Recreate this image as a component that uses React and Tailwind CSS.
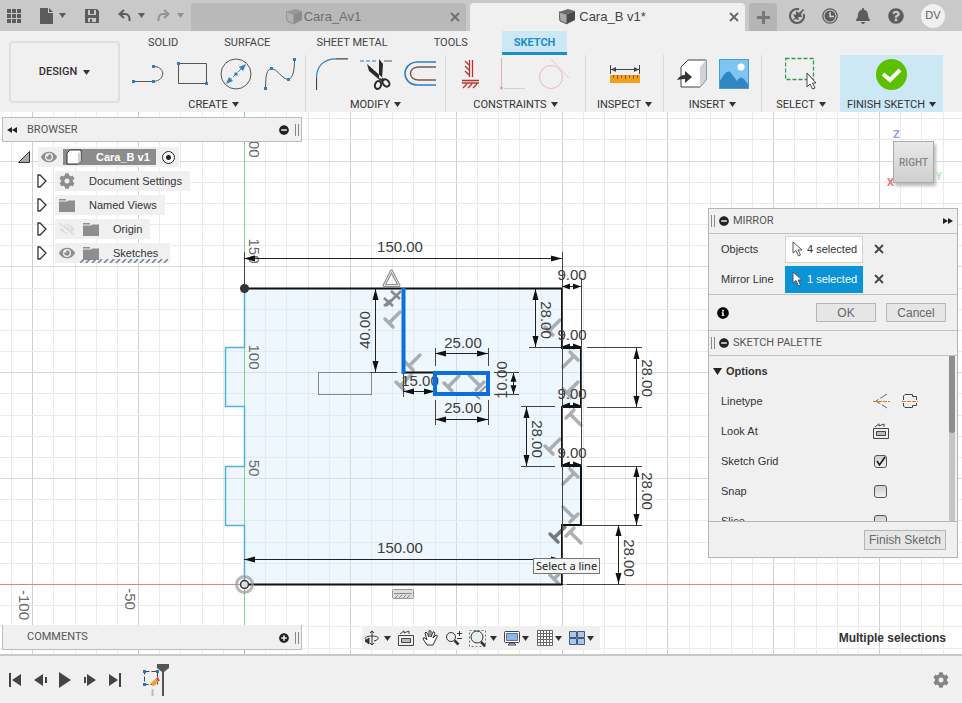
import { useState } from 'react';
import clsx from 'clsx';
import { FaBell, FaCog, FaEye, FaEyeSlash, FaQuestionCircle, FaInfoCircle, FaPlusCircle, FaMinusCircle } from 'react-icons/fa';

const RIBBON_TABS = ['SOLID', 'SURFACE', 'SHEET METAL', 'TOOLS', 'SKETCH'];

// Sketch space: 10 mm is 21.17 px, the origin sits at ORIGIN
const STEP = 21.17;
const ORIGIN = { x: 244, y: 472 };

const GRID_X = Array.from({ length: 130 }, (_, i) => i - 11);
const GRID_Y = Array.from({ length: 90 }, (_, i) => i - 22);

// direction: h = horizontal, v = vertical; a and b are the arrow tips
const DIMENSIONS = [
  { dir: 'h', at: 146, a: 244, b: 562, text: '150.00', x: 400, y: 135 },
  { dir: 'h', at: 447, a: 244, b: 562, text: '150.00', x: 400, y: 436 },
  { dir: 'h', at: 279, a: 403, b: 435, text: '15.00', x: 420, y: 269 },
  { dir: 'h', at: 241, a: 435, b: 488, text: '25.00', x: 463, y: 231 },
  { dir: 'h', at: 307, a: 435, b: 488, text: '25.00', x: 463, y: 296 },
  { dir: 'h', at: 174, a: 562, b: 581, text: '9.00', x: 572, y: 163 },
  { dir: 'h', at: 234, a: 562, b: 581, text: '9.00', x: 572, y: 223 },
  { dir: 'h', at: 293, a: 562, b: 581, text: '9.00', x: 572, y: 282 },
  { dir: 'h', at: 352, a: 562, b: 581, text: '9.00', x: 572, y: 341 },
  { dir: 'v', at: 375, a: 177, b: 260, text: '40.00', x: 365, y: 218, turn: -90 },
  { dir: 'v', at: 513, a: 261, b: 282, text: '10.00', x: 502, y: 268, turn: -90 },
  { dir: 'v', at: 535, a: 177, b: 235, text: '28.00', x: 546, y: 208, turn: 90 },
  { dir: 'v', at: 526, a: 295, b: 354, text: '28.00', x: 537, y: 327, turn: 90 },
  { dir: 'v', at: 636, a: 236, b: 295, text: '28.00', x: 647, y: 266, turn: 90 },
  { dir: 'v', at: 636, a: 354, b: 413, text: '28.00', x: 647, y: 379, turn: 90 },
  { dir: 'v', at: 618, a: 413, b: 472, text: '28.00', x: 629, y: 446, turn: 90 },
];

const EXTENSIONS = [
  'M244.5 140V176', 'M562.5 140V472', 'M581.5 166V354',
  'M370 260.5H397', 'M403.5 262V285', 'M435.5 236V254', 'M488.5 236V254',
  'M435.5 288V313', 'M488.5 288V313', 'M494 260.5H519', 'M494 282.5H519',
  'M529 235.5H561', 'M521 294.5H555', 'M521 354.5H555',
  'M587 235.5H642', 'M587 295.5H642', 'M587 354.5H642', 'M581 413.5H642', 'M567 472.5H625',
];

const AXIS_LABELS = [
  { text: '200', x: 254, y: 33 },
  { text: '150', x: 254, y: 139 },
  { text: '100', x: 254, y: 245 },
  { text: '50', x: 254, y: 356 },
  { text: '-50', x: 130, y: 487 },
  { text: '-100', x: 24, y: 493 },
];

const PERPENDICULARS = [
  [389, 211, 0], [409, 254, 0], [400, 274, 0], [448, 275, 0], [480, 274, -90],
  [549, 219, 0], [574, 244, 180], [567, 281, 0], [570, 302, 90], [549, 338, 0],
  [574, 361, 180], [574, 406, -90], [570, 420, 90], [554, 467, 0],
];

function Caret({ className = 'text-[#333]' }) {
  return (
    <svg width="7" height="5" viewBox="0 0 7 5" className={clsx('shrink-0', className)} fill="currentColor">
      <path d="M0 0H7L3.5 5Z" />
    </svg>
  );
}

function CubeIcon({ dim }) {
  return (
    <svg width="16" height="16" viewBox="0 0 16 16" className={dim ? 'opacity-40' : ''}>
      <path d="M0 3L9 0L16 2L8 5Z" fill="#6b6b6b" />
      <path d="M0 3L8 5V15L1 12Z" fill="#a9a9a9" stroke="#555" strokeWidth="1" />
      <path d="M8 5L16 2V11L8 15Z" fill="#4a4a4a" />
    </svg>
  );
}

function CloseIcon({ size }) {
  return (
    <svg width={size} height={size} viewBox="0 0 10 10" stroke="currentColor" strokeWidth="1.800"><path d="M1 1L9 9M9 1L1 9" /></svg>
  );
}

function TopBar() {
  return (
    <header className="flex h-[31px] bg-[#c9c9c9] text-[#5c5c5c]">
      <div className="flex w-[191px] shrink-0 items-center pl-[7px]">
        <button aria-label="Data panel">
          <svg width="14" height="14" viewBox="0 0 14 14" fill="currentColor">
            {[0, 5, 10].map((y) => [0, 5, 10].map((x) => <rect key={`${x}-${y}`} x={x} y={y} width="4" height="4" />))}
          </svg>
        </button>
        <button aria-label="File" className="ml-[19px] flex items-center gap-1.5">
          <svg width="13" height="16" viewBox="0 0 13 16" fill="currentColor"><path d="M0 0H8V5H13V16H0ZM9 0L13 4H9Z" /></svg>
          <Caret className="text-[#5c5c5c]" />
        </button>
        <button aria-label="Save" className="ml-[19px]">
          <svg width="14" height="14" viewBox="0 0 14 14">
            <path d="M0 0H12L14 2V14H0Z" fill="currentColor" />
            <path d="M3 1H11V6H3ZM3 9H11V13H3Z" fill="#c9c9c9" />
            <path d="M5 1H9V5H5ZM5 10H7V13H5Z" fill="currentColor" />
          </svg>
        </button>
        <button aria-label="Undo" className="ml-[19px] flex items-center gap-[7px]">
          <svg width="13" height="13" viewBox="0 0 13 13" fill="none" stroke="currentColor" strokeWidth="2"><path d="M6 1L1.5 5L6 9M2 5H7Q12 5 11.5 12" /></svg>
          <Caret className="text-[#5c5c5c]" />
        </button>
        <button aria-label="Redo" className="ml-3 flex items-center gap-[7px] text-[#929292]">
          <svg width="13" height="13" viewBox="0 0 13 13" fill="none" stroke="currentColor" strokeWidth="2"><path d="M7 1L11.5 5L7 9M11 5H6Q1 5 1.5 12" /></svg>
          <Caret className="text-[#929292]" />
        </button>
      </div>

      <div className="flex flex-1 gap-1 pt-[3px]">
        <div className="flex flex-1 items-center rounded-t bg-[#b9b9b9] px-1.5 text-[13px] text-[#6e6e6e]">
          <button className="flex flex-1 items-center justify-center gap-0.5"><CubeIcon dim />Cara_Av1</button>
          <button aria-label="Close Cara_A"><CloseIcon size={10} /></button>
        </div>
        <div className="flex flex-1 items-center rounded-t bg-[#f0f0f0] px-1.5 text-[13px] text-[#444]">
          <button className="flex flex-1 items-center justify-center gap-1"><CubeIcon />Cara_B v1*</button>
          <button aria-label="Close Cara_B" className="text-[#666]"><CloseIcon size={10} /></button>
        </div>
        <button aria-label="New design" className="flex w-7 items-center justify-center rounded-t bg-[#b5b5b5]">
          <svg width="13" height="13" viewBox="0 0 13 13" stroke="#777" strokeWidth="3"><path d="M6.5 0V13M0 6.5H13" /></svg>
        </button>
      </div>

      <div className="flex w-[185px] shrink-0 items-center gap-[17px] pl-3">
        <button aria-label="Extensions">
          <svg width="16" height="16" viewBox="0 0 16 16">
            <path d="M10 1.300A7 7 0 1 0 14.700 6" fill="none" stroke="currentColor" strokeWidth="2" />
            <path d="M2 13L6 10L4 6L7 7V3L10 5L14 1L15 2L12 6L13 9L9 9L10 12L6 11L3 14Z" fill="currentColor" />
          </svg>
        </button>
        <button aria-label="Job status">
          <svg width="16" height="16" viewBox="0 0 16 16" fill="none">
            <circle cx="8" cy="8" r="7.200" stroke="currentColor" strokeWidth="1.300" />
            <circle cx="8" cy="8" r="5.500" fill="currentColor" />
            <path d="M8 4V8.500H12" stroke="#d5d5d5" strokeWidth="1.500" />
          </svg>
        </button>
        <button aria-label="Notifications"><FaBell size={16} /></button>
        <button aria-label="Help"><FaQuestionCircle size={16} /></button>
        <button className="flex size-6 items-center justify-center rounded-full bg-[#f0f0f0] text-[11px]">DV</button>
      </div>
    </header>
  );
}

function RibbonGroup({ label, width, children, last }) {
  return (
    <div className={clsx('flex shrink-0 flex-col items-center', width, !last && 'border-r border-[#d8d8d8]')}>
      <div className="flex h-[38px] items-center justify-center gap-3">{children}</div>
      <button className="mt-1 flex items-center gap-1 text-[11px] leading-[15px] text-[#333]">{label}<Caret /></button>
    </div>
  );
}

function CreateIcons() {
  return (
    <>
      <svg width="32" height="32" viewBox="0 0 32 32" fill="none" stroke="#555" strokeWidth="1">
        <path d="M1 23.500H21M21 8.500C34 8 34 23 21 23.500" />
        <path d="M0 22h3v3H0zM20 22h3v3h-3zM20 7h3v3h-3z" fill="#2a7fc9" stroke="none" />
      </svg>
      <svg width="32" height="32" viewBox="0 0 32 32" fill="none" stroke="#555">
        <path d="M2.500 5.500H30.500V25.500H2.500Z" />
        <path d="M1 4h3v3H1zM29 24h3v3h-3z" fill="#2a7fc9" stroke="none" />
      </svg>
      <svg width="32" height="32" viewBox="0 0 32 32" fill="none" stroke="#555">
        <circle cx="16" cy="16" r="15" />
        <path d="M8 24L24 8" stroke="#2a7fc9" strokeDasharray="5 2" />
        <path d="M26 6L19 9L23 13ZM6 26L9 19L13 23ZM14.500 14.500h3v3h-3z" fill="#2a7fc9" stroke="none" />
      </svg>
      <svg width="32" height="32" viewBox="0 0 32 32" fill="none" stroke="#555">
        <path d="M1.500 30C1.500 17 3 11 7.500 10.500C13 11 18 21 24.500 21.500C29 20 30.500 12 30.500 2" />
        <path d="M0 29h3v3H0zM6 9h3v3H6zM23 20h3v3h-3zM29 0h3v3h-3z" fill="#2a7fc9" stroke="none" />
      </svg>
    </>
  );
}

function ModifyIcons() {
  return (
    <>
      <svg width="32" height="32" viewBox="0 0 32 32" fill="none" strokeWidth="1.200">
        <path d="M.5 20C.5 8 8 .8 20 .8" stroke="#2a7fc9" />
        <path d="M.5 20V32M20 .8H32" stroke="#444" />
      </svg>
      <svg width="32" height="32" viewBox="0 0 32 32" fill="none">
        <path d="M0 3H18" stroke="#2a7fc9" strokeDasharray="4 2" />
        <path d="M24 3H32" stroke="#555" />
        <path d="M19 1L23 6L22 21L19 20ZM7 6L9 13L22 24L24 21Z" fill="#2b2b2b" />
        <ellipse cx="18" cy="27" rx="3" ry="4" stroke="#2b2b2b" strokeWidth="2" transform="rotate(20 18 27)" />
        <ellipse cx="26" cy="25" rx="3" ry="4" stroke="#2b2b2b" strokeWidth="2" transform="rotate(-40 26 25)" />
      </svg>
      <svg width="32" height="32" viewBox="0 0 32 32" fill="none" strokeWidth="1.500">
        <path d="M32 4H13C-3 5-3 26 13 27H32" stroke="#2a7fc9" />
        <path d="M32 9H14C4 10 4 21 14 22H32" stroke="#7a5548" />
      </svg>
    </>
  );
}

function Ribbon() {
  return (
    <div className="flex h-[81px] bg-[#f0f0f0] font-['Roboto',sans-serif]">
      <div className="w-[122px] shrink-0 pt-2.5 pl-[9px]">
        <button className="flex h-[62px] w-[111px] items-center justify-center gap-1.5 rounded border-2 border-[#dfdfdf] text-[11px] font-medium text-[#333]">
          DESIGN<Caret />
        </button>
      </div>
      <div className="flex flex-1 flex-col">
        <nav className="flex h-6 gap-[22px] pl-3.5 text-[11px] text-[#444]">
          {RIBBON_TABS.map((tab) => (
            <button
              key={tab}
              className={clsx(
                'border-b-3 px-3 pt-[3px]',
                tab === 'SKETCH' ? 'border-[#1c8fc9] bg-[#cbe8f4] font-bold text-[#1c8fc9]' : 'border-transparent',
              )}
            >
              {tab}
            </button>
          ))}
        </nav>
        <div className="flex h-[57px]">
          <RibbonGroup label="CREATE" width="w-[184px]"><CreateIcons /></RibbonGroup>
          <RibbonGroup label="MODIFY" width="w-[140px]"><ModifyIcons /></RibbonGroup>
          <RibbonGroup label="CONSTRAINTS" width="w-[140px]">
            <svg width="17" height="32" viewBox="0 0 17 32" fill="none" stroke="#b8322b" strokeWidth="1.300">
              <path d="M7.500 2V19M10.500 2V19M7 7L3 3M7 12L3 8M7 17L3 13M0 22.500H17M0 25H17M5 26L1 30M10 26L6 30M15 26L11 30" />
            </svg>
            <svg width="34" height="32" viewBox="0 0 34 32" fill="none">
              <path d="M10.500 0V30" stroke="#e5b0b0" />
              <path d="M13 30.500H34" stroke="#d2d2d2" />
              <circle cx="10.500" cy="30" r="1.500" fill="#d9a0a0" />
            </svg>
            <svg width="32" height="32" viewBox="0 0 32 32" fill="none">
              <circle cx="14" cy="19" r="11.500" stroke="#e8baba" />
              <path d="M14 1L32 20" stroke="#d2d2d2" />
            </svg>
          </RibbonGroup>
          <RibbonGroup label="INSPECT" width="w-[78px]">
            <svg width="30" height="20" viewBox="0 0 30 20">
              <path d="M.5 1V10M29.500 1V10M1 5.500H29" stroke="#444" fill="none" />
              <path d="M1 5.500L6 3V8ZM29 5.500L24 3V8Z" fill="#444" />
              <rect y="11" width="30" height="8" fill="#f2a11f" />
              <path d="M3.500 11V14M7.500 11V15M11.500 11V14M15.500 11V15M19.500 11V14M23.500 11V15M27.500 11V14" stroke="#8a5a10" />
            </svg>
          </RibbonGroup>
          <RibbonGroup label="INSERT" width="w-[98px]">
            <svg width="30" height="30" viewBox="0 0 30 30">
              <path d="M4 8L11 1H29V21L23 28H4Z" fill="#fff" stroke="#444" />
              <path d="M23 8L29 1V21L23 28Z" fill="#cfd2d8" />
              <path d="M0 21Q3 16 8 16V12L15 18L8 24V20Q4 20 0 21Z" fill="#333" />
            </svg>
            <svg width="30" height="30" viewBox="0 0 30 30">
              <rect x=".5" y=".5" width="29" height="29" fill="#7fc5f2" stroke="#4a9bd0" />
              <path d="M1 22Q8 9 12 14L18 22Q21 16 25 20L29 25V29H1Z" fill="#2f87c3" />
              <circle cx="22" cy="8" r="3.500" fill="#fff" />
            </svg>
          </RibbonGroup>
          <RibbonGroup label="SELECT" width="w-[78px]" last>
            <svg width="32" height="34" viewBox="0 0 32 34" fill="none">
              <path d="M.5 1.500H28.500V22.500H.5Z" stroke="#2f9a4e" strokeWidth="1.300" strokeDasharray="4 2" />
              <path d="M22 16V30L25 27L27.500 32L30 31L27.500 26H31Z" fill="#fff" stroke="#444" />
            </svg>
          </RibbonGroup>
          <div className="flex w-[103px] shrink-0 bg-[#cbe8f4]">
            <RibbonGroup label="FINISH SKETCH" width="w-full" last>
              <svg width="31" height="31" viewBox="0 0 31 31">
                <circle cx="15.500" cy="15.500" r="15.500" fill="#5cc000" />
                <path d="M7 15L14 21L24 11" fill="none" stroke="#fff" strokeWidth="4" />
              </svg>
            </RibbonGroup>
          </div>
        </div>
      </div>
    </div>
  );
}

function Dimension({ dir, at, a, b, text, x, y, turn = 0 }) {
  const size = Math.min(11, (b - a) * 0.42);
  const mid = at + 0.5;
  const line = dir === 'h' ? `M${a} ${mid}H${b}` : `M${mid} ${a}V${b}`;
  const heads = dir === 'h'
    ? `M${a} ${mid}l${size} -3v6zM${b} ${mid}l${-size} -3v6z`
    : `M${mid} ${a}l-3 ${size}h6zM${mid} ${b}l-3 ${-size}h6z`;

  return (
    <g>
      <path d={line} stroke="#222" />
      <path d={heads} fill="#111" />
      <text transform={`translate(${x} ${y}) rotate(${turn})`} y="5" textAnchor="middle" fontSize="15" fill="#3c3c3c">{text}</text>
    </g>
  );
}

function Perpendicular({ x, y, angle, color = '#8f8f8f' }) {
  return (
    <g transform={`translate(${x} ${y}) rotate(${angle})`} opacity="0.7">
      <path d="M-4 -4L4 4M0 0L11 -11" stroke={color} strokeWidth="3.500" strokeLinecap="round" />
    </g>
  );
}

function SketchCanvas() {
  return (
    <svg className="absolute inset-0 size-full" fill="none" fontFamily="Liberation Sans, Arial, sans-serif">
      {/* Grid */}
      {GRID_X.map((i) => {
        const x = Math.round(ORIGIN.x + i * STEP) + 0.5;
        return <line key={i} x1={x} x2={x} y1="0" y2="100%" stroke={i % 5 === 0 ? '#cfcfcf' : '#ebebeb'} />;
      })}
      {GRID_Y.map((i) => {
        const y = Math.round(ORIGIN.y + i * STEP) + 0.5;
        return <line key={i} x1="0" x2="100%" y1={y} y2={y} stroke={i % 5 === 0 ? '#d8d8d8' : '#ebebeb'} />;
      })}

      {/* Closed profile */}
      <path
        d="M244 176H562V236H581V295H562V354H581V413H562V472H244V413H225V354H244V295H225V236H244Z"
        fill="#d4ebfb"
        fillOpacity="0.42"
      />

      {/* Axes */}
      <line x1="244.500" x2="244.500" y1="0" y2="100%" stroke="#7fd487" />
      <line x1="0" x2="100%" y1="472.500" y2="472.500" stroke="#d98585" />
      {AXIS_LABELS.map(({ text, x, y }) => (
        <text key={text} transform={`translate(${x} ${y}) rotate(90)`} y="5" textAnchor="middle" fontSize="15" fill="#6a6a6a">{text}</text>
      ))}

      {/* Constraint glyphs */}
      {PERPENDICULARS.map(([x, y, angle]) => (
        <Perpendicular key={`${x}-${y}`} x={x} y={y} angle={angle} />
      ))}
      <Perpendicular x={554} y={426} angle={0} color="#444" />
      <path d="M472 280L480 287M476 284L486 274" stroke="#9a9a9a" strokeWidth="2" />
      <path d="M386 194L401 179M384 186L393 194M384 194L391 188M391 179L400 187M393 187L399 181" stroke="#888" strokeWidth="2.500" />
      <path d="M391.500 159L399 173.500H384Z" stroke="#8f8f8f" strokeWidth="3" strokeLinejoin="round" />
      <path d="M391.500 159L399 173.500H384Z" stroke="#fff" strokeWidth=".8" />
      <rect x="392.500" y="477.500" width="21" height="9" rx="1" fill="#ddd" stroke="#999" />
      <path d="M394 481.500H412M395 486L398 483M399 486L402 483M403 486L406 483M407 486L410 483" stroke="#888" />

      <path d="M244.500 176V235.500H225.500V294.500H244.500V354.500H225.500V413.500H244.500V472" stroke="#4fb3d6" strokeWidth="1.500" />
      <path d="M244 176.500H562M244 472.500H562M405 260.500H435" stroke="#111" strokeWidth="2" />
      <path d="M562 176V236H581V295H562V354H581V413H562V473" stroke="#111" strokeWidth="2" />
      <rect x="318.500" y="260.500" width="53" height="22" stroke="#888" />

      <path d={EXTENSIONS.join('')} stroke="#444" />
      {DIMENSIONS.map((d) => <Dimension key={`${d.dir}-${d.at}-${d.a}`} {...d} />)}

      {/* Selected entities */}
      <path d="M403.500 176V262" stroke="#0d6fdc" strokeWidth="4" />
      <rect x="435" y="261" width="53" height="21" stroke="#0d6fdc" strokeWidth="4" />

      <circle cx="244.500" cy="176.500" r="4.500" fill="#333" />
      <circle cx="244.500" cy="472.500" r="8" stroke="#999" strokeWidth="3" strokeOpacity="0.7" />
      <circle cx="244.500" cy="472.500" r="4" fill="#ddd" stroke="#333" strokeWidth="1.500" />
    </svg>
  );
}

function DoubleArrow({ flip }) {
  return (
    <svg width="10" height="6" viewBox="0 0 10 6" fill="#222" className={flip ? 'rotate-180' : ''}>
      <path d="M0 0L5 3L0 6ZM5 0L10 3L5 6Z" />
    </svg>
  );
}

function Grip() {
  return <span className="h-3 w-1 border-x border-[#888]" />;
}

function FolderIcon() {
  return (
    <svg width="16" height="13" viewBox="0 0 16 13" fill="#8e8e8e"><path d="M0 0H7V1.500H0ZM0 2.500H8L9 1.500H16V13H0Z" /></svg>
  );
}

function Expander() {
  return (
    <button aria-label="Expand" className="flex w-[18px] justify-start">
      <svg width="10" height="14" viewBox="0 0 10 14" fill="#fff" stroke="#333" strokeWidth="1.300"><path d="M1 1H3L9 7L3 13H1Z" /></svg>
    </button>
  );
}

function BrowserTree() {
  return (
    <ul className="flex flex-col gap-1 pt-[5px] text-[11px] text-[#333]">
      <li className="flex h-5 items-center pl-[18px]">
        <button aria-label="Collapse" className="w-5">
          <svg width="12" height="12" viewBox="0 0 12 12" fill="#aaa" stroke="#333"><path d="M11.500 .5V11.500H.5Z" /></svg>
        </button>
        <div className="flex h-5 items-center bg-[#f0f0f0] pr-1 pl-[3px]">
          <FaEye size={16} className="text-[#8e8e8e]" />
          <div className="mx-1.5 flex h-4 items-center gap-3.5 bg-[#8c8c8c] pr-1.5 pl-[3px] font-bold text-white">
            <svg width="16" height="16" viewBox="0 0 16 16"><path d="M1 4L4 1H15V12L12 15H1Z" fill="#fff" stroke="#333" /><path d="M12 5L15 2V12L12 15Z" fill="#d0d0d6" /></svg>
            Cara_B v1
          </div>
          <input type="radio" name="active-component" aria-label="Activate component" defaultChecked className="size-[13px] appearance-none rounded-full border border-[#222] bg-[radial-gradient(circle,#222_2px,#fff_3px)]" />
        </div>
      </li>
      <li className="flex h-5 items-center pl-[37px]">
        <Expander />
        <div className="flex h-5 items-center gap-3.5 bg-[#f0f0f0] pr-2 pl-1"><FaCog size={16} className="text-[#8e8e8e]" />Document Settings</div>
      </li>
      <li className="flex h-5 items-center pl-[37px]">
        <Expander />
        <div className="flex h-5 items-center gap-3.5 bg-[#f0f0f0] pr-2 pl-1"><FolderIcon />Named Views</div>
      </li>
      <li className="flex h-5 items-center pl-[37px]">
        <Expander />
        <div className="flex h-5 items-center bg-[#f0f0f0] pr-2 pl-1">
          <FaEyeSlash size={16} className="mr-2 text-[#dcdcdc]" /><FolderIcon /><span className="ml-3.5">Origin</span>
        </div>
      </li>
      <li className="flex h-5 items-center pl-[37px]">
        <Expander />
        <div className="relative flex h-5 items-center bg-[#f0f0f0] pr-3 pl-1">
          <FaEye size={16} className="mr-2 text-[#8e8e8e]" /><FolderIcon /><span className="ml-3.5">Sketches</span>
          <svg className="absolute bottom-0 left-[25px]" width="88" height="4" stroke="#6f7f99" strokeWidth="1.500">
            {Array.from({ length: 15 }, (_, i) => <path key={i} d={`M${i * 6} 4l4 -4`} />)}
          </svg>
        </div>
      </li>
    </ul>
  );
}

function BrowserPanel() {
  return (
    <aside className="absolute top-[5px] left-0.5 w-[300px]">
      <div className="flex h-[25px] items-center border border-[#bdbdbd] bg-[#f0f0f0] pt-px pr-0.5 pl-1 font-['Roboto',sans-serif] text-[11px] text-[#555]">
        <DoubleArrow flip />
        <h2 className="ml-2.5 flex-1">BROWSER</h2>
        <button aria-label="Collapse browser" className="mr-1.5"><FaMinusCircle size={10} className="text-[#222]" /></button>
        <Grip />
      </div>
      <div className="-ml-0.5"><BrowserTree /></div>
    </aside>
  );
}

function CursorIcon() {
  return (
    <svg width="11" height="16" viewBox="0 0 11 16" fill="#fff" stroke="#555"><path d="M1 1V12L4 9.500L6.500 15L8.500 14L6 9H10Z" /></svg>
  );
}

function SelectionRow({ label, count, active }) {
  return (
    <div className="flex h-[30px] items-center pl-3">
      <span className="w-16">{label}</span>
      <button
        className={clsx(
          'flex h-[27px] w-[78px] items-center gap-1 border pl-1.5 whitespace-nowrap',
          active ? 'border-[#0a93d6] bg-[#0a93d6] text-white' : 'border-[#d8d0cc] bg-white',
        )}
      >
        <CursorIcon />{count} selected
      </button>
      <button aria-label={`Clear ${label}`} className="ml-[11px] text-[#444]"><CloseIcon size={10} /></button>
    </div>
  );
}

function PanelHeader({ title, children }) {
  return (
    <div className="flex h-[25px] items-center border-b border-[#c2c2c2] pr-1 pl-0.5 font-['Roboto',sans-serif] text-[11px] text-[#555]">
      <Grip />
      <FaMinusCircle size={10} className="mr-1 ml-1 text-[#222]" />
      <h2 className="flex-1">{title}</h2>
      {children}
    </div>
  );
}

function LookAtIcon() {
  return (
    <svg width="16" height="16" viewBox="0 0 16 16" fill="none" stroke="#444">
      <path d="M.5 5.500H15.500V15.500H.5Z" fill="#f0f0f0" />
      <path d="M3.500 8.500H12.500V12.500H3.500Z" fill="#b8bcc8" />
      <path d="M2 4L6 .8V3L11 1V4" />
    </svg>
  );
}

function OptionCheckbox({ label, checked, onChange }) {
  return (
    <label className="flex h-[30px] shrink-0 items-center pl-3">
      <span className="w-[153px]">{label}</span>
      <span className="relative flex">
        <input
          type="checkbox"
          checked={checked}
          onChange={onChange}
          className="size-[13px] appearance-none rounded-[3px] border border-[#555] bg-linear-to-b from-[#cfcfcf] to-[#f0f0f0]"
        />
        {checked && (
          <svg className="pointer-events-none absolute inset-0" width="13" height="13" viewBox="0 0 13 13" fill="none" stroke="#111" strokeWidth="1.500"><path d="M3 6L5.500 10L11 2" /></svg>
        )}
      </span>
    </label>
  );
}

function ToolPanel() {
  const [options, setOptions] = useState({ 'Sketch Grid': true, Snap: false, Slice: false });
  const toggle = (name) => setOptions({ ...options, [name]: !options[name] });

  return (
    <aside className="absolute top-24 right-1 w-[250px] border border-[#b5b5b5] bg-[#f0f0f0] text-[11px] text-[#333]">
      <PanelHeader title="MIRROR"><DoubleArrow /></PanelHeader>
      <div className="border-b border-[#c2c2c2]">
        <SelectionRow label="Objects" count={4} />
        <SelectionRow label="Mirror Line" count={1} active />
      </div>
      <div className="flex h-9 items-center gap-2.5 border-b border-[#c2c2c2] pr-[11px] pl-2 text-[12px] text-[#666]">
        <button aria-label="Info" className="mr-auto text-black"><FaInfoCircle size={12} /></button>
        <button className="h-[19px] w-[60px] border border-[#b5b5b5] bg-[#e6e6e6]">OK</button>
        <button className="h-[19px] w-[60px] border border-[#b5b5b5] bg-[#e6e6e6]">Cancel</button>
      </div>

      <PanelHeader title="SKETCH PALETTE" />
      <div className="flex h-[166px] overflow-hidden border-b border-[#b5b5b5]">
        <div className="flex flex-1 flex-col">
          <h3 className="flex h-[30px] shrink-0 items-center gap-1 pl-1 font-bold">
            <svg width="9" height="7" viewBox="0 0 9 7" fill="#222"><path d="M0 0H9L4.500 7Z" /></svg>
            Options
          </h3>
          <div className="flex h-[30px] shrink-0 items-center pl-3">
            <span className="w-[152px]">Linetype</span>
            <button aria-label="Construction" className="mr-3">
              <svg width="17" height="16" viewBox="0 0 17 16" fill="none" stroke="#666"><path d="M14 1L3 8L14 15" strokeDasharray="8 2" /><path d="M0 8.500H17" stroke="#e07a2a" strokeDasharray="4 1" /></svg>
            </button>
            <button aria-label="Centerline">
              <svg width="16" height="16" viewBox="0 0 16 16" fill="none" stroke="#444"><path d="M1.500 7V3L3 1.500H10.500V3.500H14.500V7M1.500 10V13L3 14.500H10.500V12.500H14.500V10" /><path d="M0 8.500H16" stroke="#e07a2a" strokeDasharray="4 1" /></svg>
            </button>
          </div>
          <div className="flex h-[30px] shrink-0 items-center pl-3">
            <span className="w-[152px]">Look At</span>
            <button aria-label="Look at sketch"><LookAtIcon /></button>
          </div>
          {Object.entries(options).map(([name, checked]) => (
            <OptionCheckbox key={name} label={name} checked={checked} onChange={() => toggle(name)} />
          ))}
        </div>
        <div className="mr-0.5 w-1.5 bg-[#c4c4c4]"><div className="h-[77px] rounded-b bg-[#8e8e8e]" /></div>
      </div>
      <div className="flex h-[35px] items-center justify-end pr-[11px] text-[12px] text-[#666]">
        <button className="h-5 w-[82px] border border-[#b5b5b5] bg-[#e6e6e6] whitespace-nowrap">Finish Sketch</button>
      </div>
    </aside>
  );
}

function ViewCube() {
  return (
    <div className="absolute top-[29px] right-7 font-['Roboto',sans-serif]">
      <button className="h-[42px] w-[41px] border border-[#aaa] bg-linear-to-b from-[#e9e9e9] to-[#cfcfcf] text-[10px] font-medium text-[#858585] shadow-[2px_3px_3px_#bbb]">RIGHT</button>
      <span className="absolute -top-3 left-0 text-[11px] leading-3 font-bold text-[#9a9aec]">Z</span>
      <span className="absolute -bottom-1.5 -left-1.5 text-[11px] leading-3 font-bold text-[#e87777]">X</span>
      <span className="absolute -right-2 bottom-0 text-[10px] leading-3 font-bold text-[#a5e8a5]">Y</span>
    </div>
  );
}

function NavBar() {
  return (
    <div className="absolute bottom-1 left-1/2 flex h-6 w-[238px] -translate-x-1/2 items-center justify-between bg-[#f0f0f0] pr-1.5 pl-0.5 text-[#333]">
      <button aria-label="Orbit" className="flex items-center gap-1">
        <svg width="16" height="16" viewBox="0 0 16 16" fill="none" stroke="#333"><path d="M8 1V15M6 3L8 .8L10 3M6 13L8 15L10 13" /><path d="M4 11C-1 9 1 6 8 6S17 9 10 11" /><path d="M1 11L5 8V14Z" fill="#333" /></svg>
        <Caret />
      </button>
      <button aria-label="Look at"><LookAtIcon /></button>
      <button aria-label="Pan">
        <svg width="16" height="16" viewBox="0 0 16 16" fill="#fff" stroke="#333"><path d="M5 15L1 9Q1 7 3 8L5 10L3 3Q4 1 5 3L7 7V1Q8 0 9 1V7L11 2Q12 1 13 3L11 8L14 5Q16 5 15 7L11 15Z" /></svg>
      </button>
      <button aria-label="Zoom">
        <svg width="17" height="16" viewBox="0 0 17 16" fill="none" stroke="#333"><circle cx="6" cy="7" r="4.500" fill="#e8f0ee" /><path d="M9.500 10.500L13.500 14.500" strokeWidth="2.500" /><path d="M14.500 1V6M12 3.500H17M12 8.500H17" /></svg>
      </button>
      <button aria-label="Zoom window" className="flex items-center gap-1">
        <svg width="17" height="17" viewBox="0 0 17 17" fill="none" stroke="#333"><rect x=".5" y=".5" width="16" height="16" strokeDasharray="2 2" stroke="#777" /><circle cx="8" cy="7" r="6" fill="#e8f0ee" /><path d="M12 12L16 16" strokeWidth="2.500" /></svg>
        <Caret />
      </button>
      <button aria-label="Display settings" className="flex items-center gap-0.5">
        <svg width="16" height="16" viewBox="0 0 16 16" stroke="#444"><rect x=".5" y="1.500" width="15" height="11" rx="1" fill="#fff" /><rect x="2.500" y="3.500" width="11" height="7" fill="#8db4e2" stroke="#5577a5" /><path d="M4 15H12L10 13H6Z" fill="#ccc" /></svg>
        <Caret />
      </button>
      <button aria-label="Grid and snaps" className="flex items-center gap-0.5">
        <svg width="16" height="16" viewBox="0 0 16 16" fill="#fff" stroke="#666"><path d="M.5 .5H15.500V15.500H.5ZM3.500 0V16M6.500 0V16M9.500 0V16M12.500 0V16M0 3.500H16M0 6.500H16M0 9.500H16M0 12.500H16" /></svg>
        <Caret />
      </button>
      <button aria-label="Viewports" className="flex items-center gap-0.5">
        <svg width="16" height="14" viewBox="0 0 16 14" fill="#a9c8ee" stroke="#44587a"><path d="M.5 .5H7.500V6.500H.5ZM8.500 .5H15.500V6.500H8.500ZM.5 7.500H7.500V13.500H.5ZM8.500 7.500H15.500V13.500H8.500Z" /></svg>
        <Caret />
      </button>
    </div>
  );
}

function Timeline() {
  return (
    <footer className="flex h-[49px] items-center border-t-2 border-[#c9c9c9] bg-[#f0f0f0] pr-[13px] pl-[9px] text-[#444]">
      <div className="flex items-center gap-3">
        <button aria-label="Go to start"><svg width="13" height="14" viewBox="0 0 13 14" fill="currentColor"><path d="M0 0H2V14H0ZM12 1V13L3 7Z" /></svg></button>
        <button aria-label="Step back"><svg width="13" height="14" viewBox="0 0 13 14" fill="currentColor"><path d="M9 1V13L0 7ZM11 4H13V10H11Z" /></svg></button>
        <button aria-label="Play"><svg width="13" height="16" viewBox="0 0 13 16" fill="currentColor"><path d="M0 0L12 8L0 16Z" /></svg></button>
        <button aria-label="Step forward"><svg width="13" height="14" viewBox="0 0 13 14" fill="currentColor"><path d="M3 1V13L12 7ZM0 4H2V10H0Z" /></svg></button>
        <button aria-label="Go to end"><svg width="13" height="14" viewBox="0 0 13 14" fill="currentColor"><path d="M10 0H12V14H10ZM0 1V13L9 7Z" /></svg></button>
      </div>
      <button aria-label="Sketch feature" className="ml-5">
        <svg width="28" height="34" viewBox="0 0 28 34" fill="none">
          <path d="M2.500 8.500H15.500V21.500H2.500Z" stroke="#444" strokeDasharray="5 2" />
          <path d="M1 7h3v3H1zM14 7h3v3h-3zM1 20h3v3H1z" fill="#2a6fc9" />
          <path d="M10 22L16 16" stroke="#f0a040" strokeWidth="4" />
          <path d="M15 15L17 18" stroke="#d04030" strokeWidth="2" />
          <path d="M10.500 26V33" stroke="#bbb" strokeWidth="2" />
          <path d="M15 1H27V5L22 9V33H20V9L15 5Z" fill="#555" />
        </svg>
      </button>
      <button aria-label="Timeline settings" className="ml-auto text-[#858585]"><FaCog size={16} /></button>
    </footer>
  );
}

function App() {
  return (
    <div className="flex h-screen flex-col overflow-hidden bg-white font-['Liberation_Sans',Arial,sans-serif]">
      <TopBar />
      <Ribbon />
      <main className="relative flex-1 overflow-hidden">
        <SketchCanvas />
        <div className="absolute top-[446px] left-[533px] border border-[#777] bg-[#f4f4f4] px-0.5 font-['Noto_Sans',sans-serif] text-[11px] leading-[14px] whitespace-nowrap text-[#222]">Select a line</div>
        <BrowserPanel />
        <ViewCube />
        <ToolPanel />
        <div className="absolute bottom-1 left-0.5 flex h-[25px] w-[300px] items-center border border-t-0 border-[#bdbdbd] bg-[#f0f0f0] pt-px pr-0.5 pl-6 font-['Roboto',sans-serif] text-[11px] text-[#555]">
          <h2 className="flex-1">COMMENTS</h2>
          <button aria-label="Add comment" className="mr-1.5"><FaPlusCircle size={10} className="text-[#222]" /></button>
          <Grip />
        </div>
        <NavBar />
        <p className="absolute right-4 bottom-2 text-[12px] leading-4 font-bold text-[#333]">Multiple selections</p>
      </main>
      <Timeline />
    </div>
  );
}

export default App;
